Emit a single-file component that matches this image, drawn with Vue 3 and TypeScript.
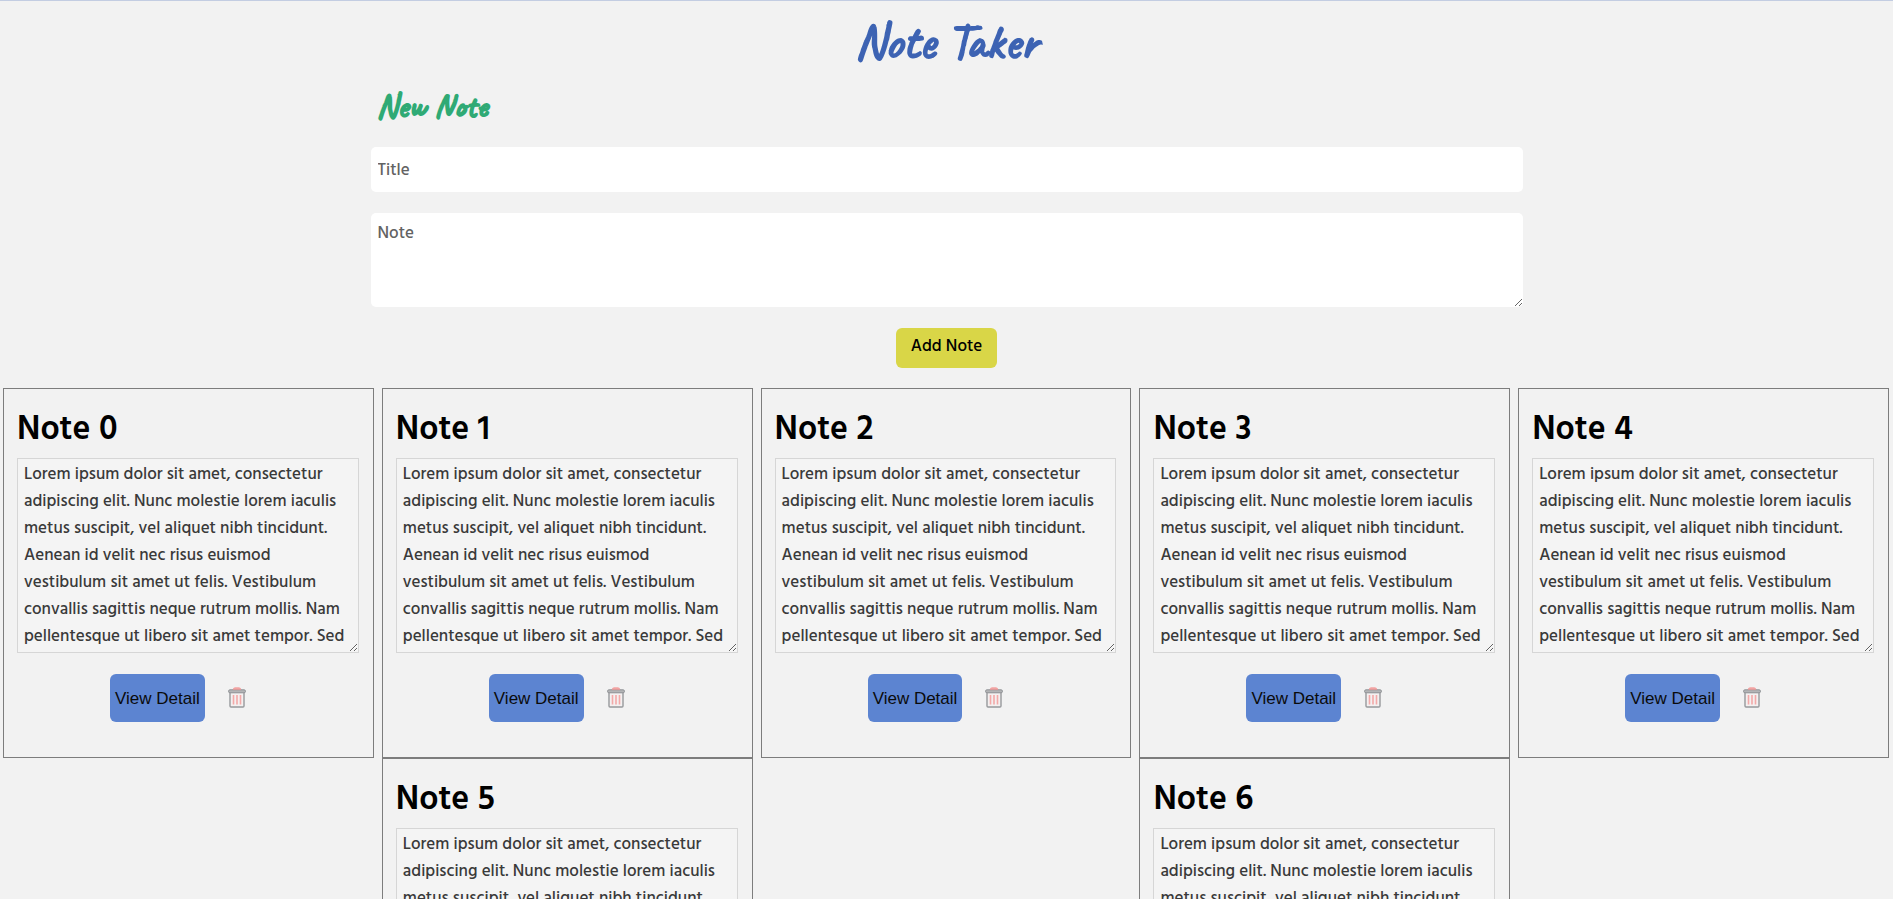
<script setup lang="ts">
import { ref } from 'vue'

interface Note {
  id: number
  title: string
  body: string
}

const lorem =
  'Lorem ipsum dolor sit amet, consectetur adipiscing elit. Nunc molestie lorem iaculis metus suscipit, vel aliquet nibh tincidunt. Aenean id velit nec risus euismod vestibulum sit amet ut felis. Vestibulum convallis sagittis neque rutrum mollis. Nam pellentesque ut libero sit amet tempor. Sed'

const notes = ref<Note[]>(
  Array.from({ length: 7 }, (_, id) => ({ id, title: `Note ${id}`, body: lorem })),
)
const title = ref('')
const body = ref('')

function addNote(): void {
  if (!title.value.trim()) return
  const id = Math.max(-1, ...notes.value.map((note) => note.id)) + 1
  notes.value.push({ id, title: title.value, body: body.value })
  title.value = ''
  body.value = ''
}

function removeNote(id: number): void {
  notes.value = notes.value.filter((note) => note.id !== id)
}
</script>

<template>
  <div class="page">
    <h1 class="brand">Note Taker</h1>

    <form class="new-note" @submit.prevent="addNote">
      <h2 class="form-heading">New Note</h2>
      <input v-model="title" class="field" type="text" placeholder="Title" aria-label="Title" />
      <textarea v-model="body" class="field area" rows="3" placeholder="Note" aria-label="Note"></textarea>
      <button class="add" type="submit">Add Note</button>
    </form>

    <main class="notes">
      <article v-for="note in notes" :key="note.id" class="card">
        <h2 class="card-title">{{ note.title }}</h2>
        <textarea v-model="note.body" class="card-body" rows="7" :aria-label="note.title"></textarea>
        <div class="actions">
          <button class="view" type="button">View Detail</button>
          <button class="delete" type="button" aria-label="Delete note" @click="removeNote(note.id)">
            <svg width="18" height="22" viewBox="0 0 18 22" aria-hidden="true">
              <path d="M4.5 3Q5 0.2 7 0.2H11Q13 0.2 13.5 3Z" fill="#f2a3a2" />
              <path d="M2 5V19Q2 20 3 20H15Q16 20 16 19V5Z" fill="#f4f0f0" stroke="#97999c" stroke-width="1.4" />
              <path d="M5.5 8V17.5M9 8V17.5M12.5 8V17.5" stroke="#f3a9a8" stroke-width="1.6" />
              <rect x="0.5" y="2.8" width="17" height="3" rx="1.5" fill="#b3b4b6" stroke="#929497" />
              <path d="M5 2.6H13" stroke="#e09a9a" />
            </svg>
          </button>
        </div>
      </article>
    </main>
  </div>
</template>

<style>
body {
  margin: 0;
  background: #f2f2f2;
}
</style>

<style scoped>
.page {
  height: 100vh;
  overflow: hidden;
  box-sizing: border-box;
  border-top: 1px solid #c3cde2;
  background: #f2f2f2;
  color: #000;
  font-family: Hind, 'Noto Sans', sans-serif;
  font-size: 17px;
  line-height: 27px;
}

.brand,
.form-heading {
  margin: 0;
  font-family: Caveat, 'Caveat Brush', Lato, cursive;
  font-weight: 400;
  -webkit-text-stroke: 2px currentColor;
}

.brand {
  padding: 11px 0 2px;
  font-size: 50px;
  line-height: 60px;
  text-align: center;
  color: #3d63b3;
}

.new-note {
  display: flex;
  flex-direction: column;
  gap: 21px;
  width: 61%;
  max-width: 1152px;
  margin: 0 auto;
}

.form-heading {
  padding: 12px 6px 0;
  font-size: 34px;
  line-height: 40px;
  color: #2faa75;
}

.field {
  display: block;
  box-sizing: border-box;
  width: 100%;
  margin: 0;
  padding: 10px 7px 8px;
  border: 0;
  border-radius: 5px;
  background: #fff;
  color: #444;
  font: inherit;
  font-weight: 500;
}

.field::placeholder {
  color: #636363;
  opacity: 1;
}

.area {
  padding: 7px 7px 6px;
  resize: both;
}

.add {
  align-self: center;
  padding: 5px 15px 8px;
  border: 0;
  border-radius: 6px;
  background: #d9d647;
  color: #000;
  font: inherit;
  font-weight: 500;
}

.notes {
  display: grid;
  grid-template-columns: repeat(5, 1fr);
  column-gap: 8px;
  padding: 20px 4px 0 3px;
}

.card {
  box-sizing: border-box;
  min-width: 0;
  padding: 17px 14px 35px 13px;
  border: 1px solid #7d7d7d;
}

.card:nth-child(6) {
  grid-column: 2;
}

.card:nth-child(7) {
  grid-column: 4;
}

.card-title {
  margin: 0 0 2px;
  font-size: 34px;
  line-height: 50px;
  font-weight: 600;
}

.card-body {
  display: block;
  box-sizing: border-box;
  width: 100%;
  margin: 0;
  padding: 2px 6px;
  overflow: hidden;
  border: 1px solid #d6d6d6;
  background: #f4f4f4;
  color: #3a3a3a;
  font: inherit;
  font-weight: 500;
}

.actions {
  display: flex;
  align-items: center;
  justify-content: center;
  gap: 23px;
  padding: 21px 20px 0 0;
}

.view {
  padding: 1px 5px 0;
  border: 0;
  border-radius: 6px;
  background: #5c84d1;
  color: #0b0b0b;
  font-family: 'Liberation Sans', Arial, sans-serif;
  font-size: 17px;
  line-height: 47px;
}

.delete {
  display: flex;
  padding: 0;
  border: 0;
  background: none;
}
</style>
